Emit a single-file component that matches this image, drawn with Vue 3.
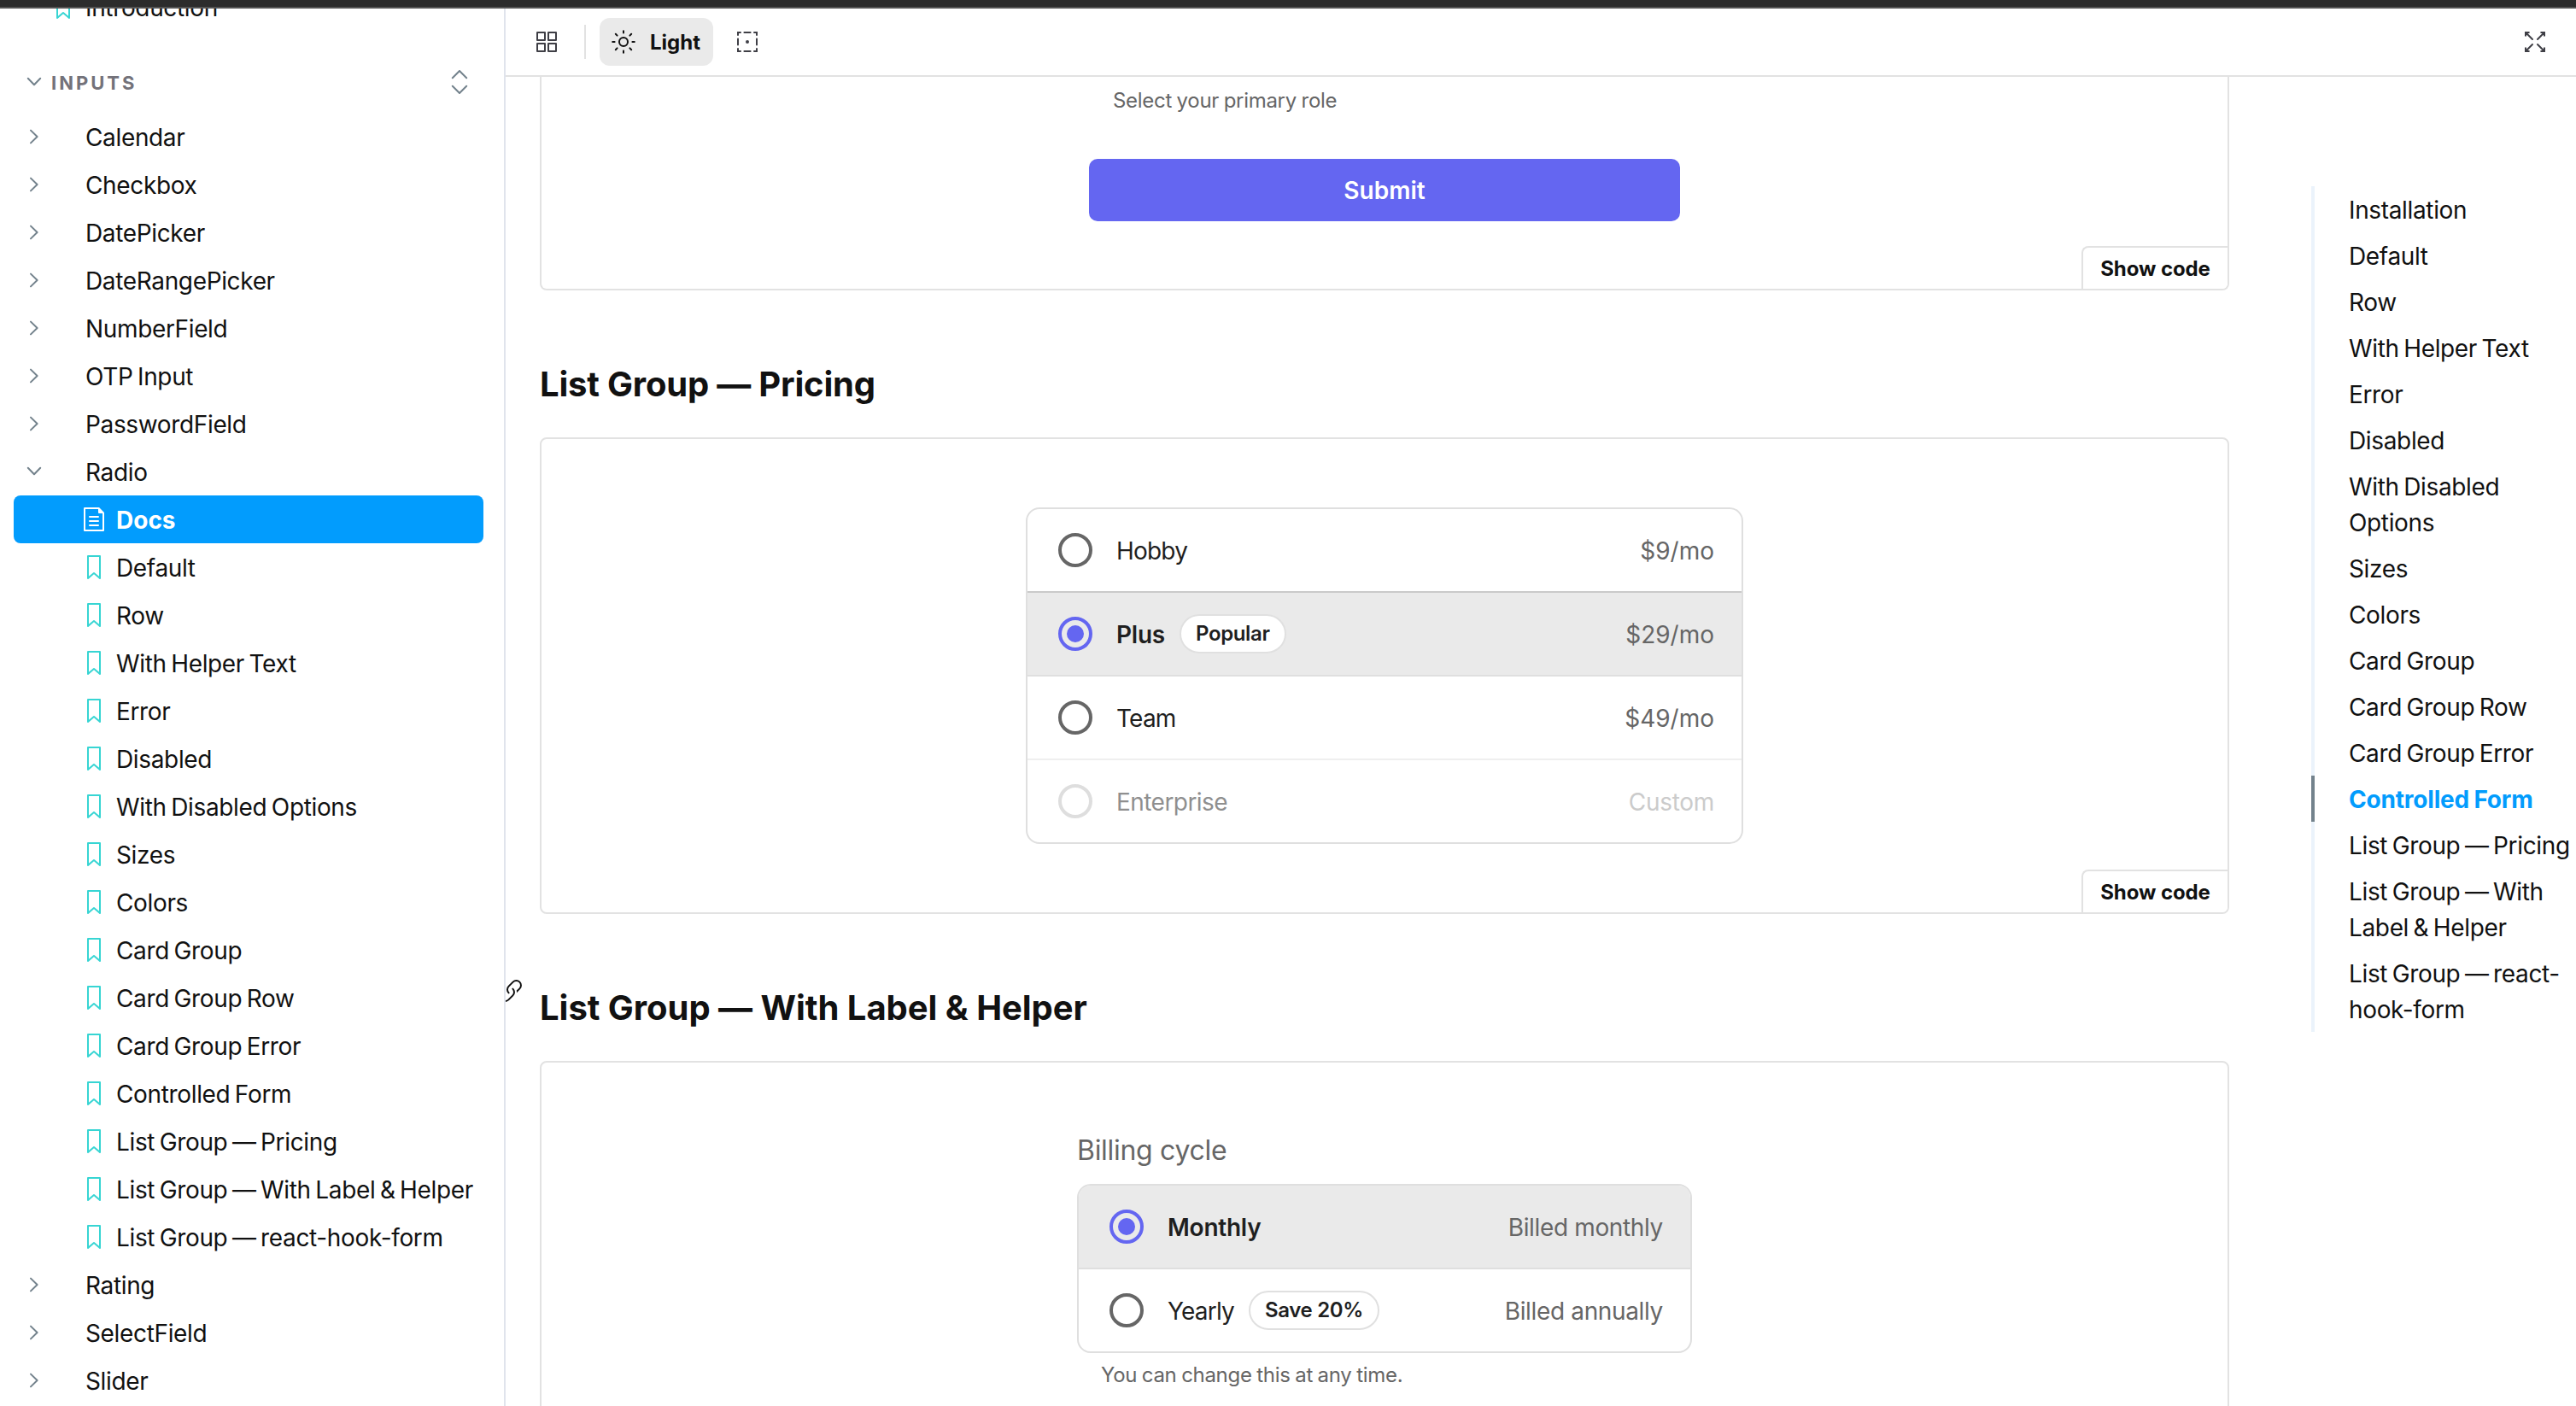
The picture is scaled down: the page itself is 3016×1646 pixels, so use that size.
<template>
    <div class="window">
        <div class="window-edge"></div>
        <div class="layout">
            <aside class="sidebar">
                <div class="tree-row story intro">
                    <svg class="icon bookmark" viewBox="0 0 14 14"><path :d="icons.bookmark" /></svg>
                    <span>Introduction</span>
                </div>
                <div class="tree-heading">
                    <svg class="chevron" viewBox="0 0 20 20"><path d="M2.8 5.8 10 13.2l7.2-7.4" /></svg>
                    <span class="heading-text">INPUTS</span>
                    <svg class="expand" viewBox="0 0 20 28"><path d="M1.8 9.2 10 1l8.2 8.2M1.8 18.8 10 27l8.2-8.2" /></svg>
                </div>
                <template v-for="item in tree" :key="item.name">
                    <div class="tree-row component">
                        <svg class="chevron" viewBox="0 0 20 20">
                            <path :d="item.children ? 'M2.8 5.8 10 13.2l7.2-7.4' : 'M6 2.6 13.6 10 6 17.4'" />
                        </svg>
                        <span>{{ item.name }}</span>
                    </div>
                    <div
                        v-for="child in item.children"
                        :key="child"
                        class="tree-row story"
                        :class="{ selected: child === selectedStory }"
                    >
                        <svg class="icon" :class="{ bookmark: child !== 'Docs' }" viewBox="0 0 14 14">
                            <path :d="child === 'Docs' ? icons.document : icons.bookmark" />
                        </svg>
                        <span>{{ child }}</span>
                    </div>
                </template>
            </aside>

            <main class="main">
                <header class="toolbar">
                    <svg class="icon" viewBox="0 0 14 14"><path :d="icons.grid" /></svg>
                    <span class="separator"></span>
                    <button class="theme-button">
                        <svg class="icon line" viewBox="0 0 14 14">
                            <circle cx="7" cy="7" r="2.5" />
                            <path
                                d="M7 .6v1.2M7 12.2v1.2M.6 7h1.2M12.2 7h1.2M2.4 2.4l.9.9M10.7 10.7l.9.9M2.4 11.6l.9-.9M10.7 3.3l.9-.9"
                            />
                        </svg>
                        <span>Light</span>
                    </button>
                    <svg class="icon line outline-icon" viewBox="0 0 14 14">
                        <path
                            d="M1.5 3V1.5H3M5.2 1.5h3.6M11 1.5h1.5V3M12.5 5.2v3.6M12.5 11v1.5H11M8.8 12.5H5.2M3 12.5H1.5V11M1.5 8.8V5.2"
                        />
                        <circle cx="7" cy="7" r=".5" />
                    </svg>
                    <svg class="icon line fullscreen" viewBox="0 0 14 14">
                        <path
                            d="M1.5 3.4V1.5h1.9M1.5 1.5l4 4M10.6 1.5h1.9v1.9M12.5 1.5l-4 4M12.5 10.6v1.9h-1.9M12.5 12.5l-4-4M3.4 12.5H1.5v-1.9M1.5 12.5l4-4"
                        />
                    </svg>
                </header>

                <div class="page">
                    <div class="content">
                        <section class="panel panel-cut">
                            <div class="form">
                                <p class="helper">Select your primary role</p>
                                <button class="submit">Submit</button>
                            </div>
                            <button class="show-code">Show code</button>
                        </section>

                        <h3 class="title title-short">List Group — Pricing</h3>
                        <section class="panel">
                            <div class="list-group pricing">
                                <div
                                    v-for="plan in plans"
                                    :key="plan.label"
                                    class="option"
                                    :class="{ checked: plan.label === selectedPlan, disabled: plan.disabled }"
                                    @click="selectPlan(plan)"
                                >
                                    <span class="radio"></span>
                                    <span class="option-label">{{ plan.label }}</span>
                                    <span v-if="plan.badge" class="badge">{{ plan.badge }}</span>
                                    <span class="option-meta">{{ plan.meta }}</span>
                                </div>
                            </div>
                            <button class="show-code">Show code</button>
                        </section>

                        <h3 class="title">
                            <svg class="icon anchor" viewBox="0 0 14 14"><path :d="icons.link" /></svg>
                            List Group — With Label &amp; Helper
                        </h3>
                        <section class="panel panel-last">
                            <div class="billing">
                                <p class="group-label">Billing cycle</p>
                                <div class="list-group">
                                    <div
                                        v-for="cycle in cycles"
                                        :key="cycle.label"
                                        class="option"
                                        :class="{ checked: cycle.label === selectedCycle }"
                                        @click="selectedCycle = cycle.label"
                                    >
                                        <span class="radio"></span>
                                        <span class="option-label">{{ cycle.label }}</span>
                                        <span v-if="cycle.badge" class="badge">{{ cycle.badge }}</span>
                                        <span class="option-meta">{{ cycle.meta }}</span>
                                    </div>
                                </div>
                                <p class="helper">You can change this at any time.</p>
                            </div>
                        </section>
                    </div>

                    <nav class="toc">
                        <a v-for="entry in toc" :key="entry" :class="{ active: entry === activeEntry }">{{ entry }}</a>
                    </nav>
                </div>
            </main>
        </div>
    </div>
</template>

<script setup>
import { ref } from "vue";

const icons = {
    bookmark:
        "M3.5 0h7a.5.5 0 01.5.5v13a.5.5 0 01-.454.498.462.462 0 01-.371-.118L7 11.159l-3.175 2.72a.46.46 0 01-.379.118A.5.5 0 013 13.5V.5a.5.5 0 01.5-.5zM4 12.413l2.664-2.284a.454.454 0 01.377-.128.498.498 0 01.284.12L10 12.412V1H4v11.413z",
    document:
        "M4 5.5a.5.5 0 01.5-.5h5a.5.5 0 010 1h-5a.5.5 0 01-.5-.5zM4.5 7.5a.5.5 0 000 1h5a.5.5 0 000-1h-5zM4 10.5a.5.5 0 01.5-.5h5a.5.5 0 010 1h-5a.5.5 0 01-.5-.5zM1.5 0a.5.5 0 00-.5.5v13a.5.5 0 00.5.5h11a.5.5 0 00.5-.5V3.207a.5.5 0 00-.146-.353L10.146.146A.5.5 0 009.793 0H1.5zM2 1h7.5v2a.5.5 0 00.5.5h2V13H2V1z",
    grid: "M1 1.5a.5.5 0 01.5-.5H6a.5.5 0 01.5.5V6a.5.5 0 01-.5.5H1.5A.5.5 0 011 6V1.5zm1 4V2h3.5v3.5H2zM7.5 1.5A.5.5 0 018 1h4.5a.5.5 0 01.5.5V6a.5.5 0 01-.5.5H8a.5.5 0 01-.5-.5V1.5zm1 4V2H12v3.5H8.5zM1.5 7.5A.5.5 0 001 8v4.5a.5.5 0 00.5.5H6a.5.5 0 00.5-.5V8a.5.5 0 00-.5-.5H1.5zm.5 1V12h3.5V8.5H2zM7.5 8a.5.5 0 01.5-.5h4.5a.5.5 0 01.5.5v4.5a.5.5 0 01-.5.5H8a.5.5 0 01-.5-.5V8zm1 .5V12H12V8.5H8.5z",
    link: "M11.841 2.159a2.25 2.25 0 00-3.182 0l-2.5 2.5a2.25 2.25 0 000 3.182.5.5 0 01-.707.707 3.25 3.25 0 010-4.596l2.5-2.5a3.25 3.25 0 014.596 4.596l-2.063 2.063a4.27 4.27 0 00-.094-1.32l1.45-1.45a2.25 2.25 0 000-3.182zM3.61 7.21c-.1-.434-.132-.88-.095-1.321L1.452 7.952a3.25 3.25 0 104.596 4.596l2.5-2.5a3.25 3.25 0 000-4.596.5.5 0 00-.707.707 2.25 2.25 0 010 3.182l-2.5 2.5A2.25 2.25 0 112.159 8.66l1.45-1.45z",
};

const stories = [
    "Default",
    "Row",
    "With Helper Text",
    "Error",
    "Disabled",
    "With Disabled Options",
    "Sizes",
    "Colors",
    "Card Group",
    "Card Group Row",
    "Card Group Error",
    "Controlled Form",
    "List Group — Pricing",
    "List Group — With Label & Helper",
    "List Group — react-hook-form",
];

const tree = [
    { name: "Calendar" },
    { name: "Checkbox" },
    { name: "DatePicker" },
    { name: "DateRangePicker" },
    { name: "NumberField" },
    { name: "OTP Input" },
    { name: "PasswordField" },
    { name: "Radio", children: ["Docs", ...stories] },
    { name: "Rating" },
    { name: "SelectField" },
    { name: "Slider" },
];

const toc = ["Installation", ...stories];

const plans = [
    { label: "Hobby", meta: "$9/mo" },
    { label: "Plus", meta: "$29/mo", badge: "Popular" },
    { label: "Team", meta: "$49/mo" },
    { label: "Enterprise", meta: "Custom", disabled: true },
];

const cycles = [
    { label: "Monthly", meta: "Billed monthly" },
    { label: "Yearly", meta: "Billed annually", badge: "Save 20%" },
];

const selectedStory = ref("Docs");
const activeEntry = ref("Controlled Form");
const selectedPlan = ref("Plus");
const selectedCycle = ref("Monthly");

const selectPlan = (plan) => {
    if (!plan.disabled) {
        selectedPlan.value = plan.label;
    }
};
</script>

<style>
body {
    margin: 0;
    overflow: hidden;
}
</style>

<style scoped>
.window {
    display: flex;
    flex-direction: column;
    height: 1646px;
    overflow: hidden;
    background: #fff;
    color: #111;
    font-family: Inter, "Liberation Sans", sans-serif;
    font-size: 28px;
}

.window * {
    box-sizing: border-box;
}

.window-edge {
    flex: none;
    height: 10px;
    background: #2c2c2c;
    border-bottom: 2px solid #545454;
}

.layout {
    display: flex;
    flex: 1;
    min-height: 0;
}

button {
    border: none;
    font-family: inherit;
    color: inherit;
    background: #fff;
}

p {
    margin: 0;
}

.icon {
    flex: none;
    width: 28px;
    height: 28px;
    fill: currentColor;
    fill-rule: evenodd;
}

.icon.line {
    fill: none;
    stroke: currentColor;
    stroke-width: 1;
    stroke-linecap: round;
}

/* sidebar */
.sidebar {
    flex: none;
    width: 592px;
    padding: 0 24px 0 16px;
    border-right: 2px solid #e0e4ec;
    overflow: hidden;
}

.tree-row {
    display: flex;
    align-items: center;
    height: 56px;
    border-radius: 8px;
    white-space: nowrap;
    letter-spacing: -0.35px;
    word-spacing: -2px;
}

.tree-row span {
    padding-top: 2px;
}

.tree-row.component {
    gap: 50px;
    padding-left: 14px;
}

.tree-row.story {
    gap: 12px;
    padding-left: 80px;
}

.tree-row.intro {
    margin-top: -30px;
    padding-left: 44px;
    gap: 12px;
}

.tree-row.selected {
    background: #029cfd;
    color: #fff;
    font-weight: 700;
    letter-spacing: 0;
}

.bookmark {
    color: #37d5d3;
}

.chevron {
    flex: none;
    width: 20px;
    height: 20px;
}

.chevron path,
.expand path {
    fill: none;
    stroke: #73828c;
    stroke-width: 2;
    stroke-linecap: round;
    stroke-linejoin: round;
}

.tree-heading {
    display: flex;
    align-items: center;
    height: 56px;
    margin: 32px 0 8px;
    padding: 0 18px 0 14px;
    color: #73727a;
    font-size: 22px;
    font-weight: 700;
    letter-spacing: 3px;
}

.heading-text {
    flex: 1;
    margin-left: 10px;
    padding-top: 1px;
}

.expand {
    width: 20px;
    height: 28px;
}

/* toolbar */
.main {
    display: flex;
    flex: 1;
    flex-direction: column;
    min-width: 0;
}

.toolbar {
    display: flex;
    flex: none;
    align-items: center;
    height: 80px;
    padding: 0 34px;
    border-bottom: 2px solid #e2e2e2;
    color: #3f3f46;
}

.separator {
    width: 2px;
    height: 40px;
    margin: 0 16px 0 30px;
    background: #e2e2e2;
}

.theme-button {
    display: flex;
    align-items: center;
    gap: 17px;
    width: 133px;
    height: 56px;
    padding: 0 14px;
    border-radius: 12px;
    background: #eaeaea;
    color: #111;
    font-size: 24px;
    font-weight: 700;
}

.outline-icon {
    margin-left: 26px;
}

.fullscreen {
    margin-left: auto;
}

/* docs page */
.page {
    display: flex;
    flex: 1;
    align-items: flex-start;
    min-height: 0;
    overflow: hidden;
}

.content {
    flex: none;
    width: 2018px;
    padding-left: 40px;
}

.panel {
    display: flex;
    flex-direction: column;
    align-items: center;
    height: 558px;
    padding-top: 80px;
    border: 2px solid #e2e2e2;
    border-radius: 8px;
}

.panel-cut {
    height: 250px;
    padding-top: 8px;
    border-top: none;
    border-top-left-radius: 0;
    border-top-right-radius: 0;
}

.show-code {
    align-self: flex-end;
    width: 171px;
    height: 50px;
    margin-top: auto;
    padding: 0;
    border: 2px solid #e2e2e2;
    border-width: 2px 0 0 2px;
    border-radius: 8px 0 6px 0;
    font-size: 24px;
    font-weight: 700;
    letter-spacing: -0.1px;
}

.title {
    position: relative;
    margin: 80px 0 32px;
    font-size: 40px;
    font-weight: 700;
    line-height: 60px;
    letter-spacing: -0.03px;
}

.title-short {
    letter-spacing: -0.2px;
}

/* hover anchor hangs in the gutter, partly under the sidebar */
.anchor {
    position: absolute;
    left: -48px;
    top: -4px;
    clip-path: inset(0 0 0 8px);
}

.form {
    display: flex;
    flex-direction: column;
    width: 692px;
}

.form .helper {
    margin: 0 0 48px;
}

.helper {
    padding-left: 28px;
    color: #666;
    font-size: 24px;
    line-height: 40px;
    letter-spacing: -0.3px;
    word-spacing: -0.8px;
}

.submit {
    height: 73px;
    border-radius: 10px;
    background: #6466f1;
    color: #fff;
    font-size: 28px;
    font-weight: 600;
}

.billing {
    width: 720px;
}

.billing .helper {
    margin-top: 6px;
}

.group-label {
    margin-bottom: 17px;
    padding-top: 1px;
    color: #666;
    font-size: 32px;
    line-height: 44px;
    letter-spacing: -0.3px;
}

.list-group {
    border: 2px solid #dfdfdf;
    border-radius: 16px;
    overflow: hidden;
}

.list-group.pricing {
    width: 840px;
}

.option {
    display: flex;
    align-items: center;
    height: 96px;
    padding: 0 32px 0 36px;
    color: #1f1f1f;
}

.option + .option {
    height: 98px;
    border-top: 2px solid #dfdfdf;
}

.option.checked {
    background: #eaeaea;
}

.option + .option.checked {
    border-top-color: #cacaca;
}

.option + .option.disabled {
    border-top-color: #efefef;
}

.radio {
    display: flex;
    align-items: center;
    justify-content: center;
    width: 40px;
    height: 40px;
    margin-right: 28px;
    border: 4px solid #666;
    border-radius: 50%;
}

.checked .radio {
    border-color: #6466f1;
}

.checked .radio::after {
    content: "";
    width: 20px;
    height: 20px;
    border-radius: 50%;
    background: #6466f1;
}

.disabled .radio {
    border-color: #dedede;
}

.option-label {
    padding-top: 1px;
    letter-spacing: -0.8px;
}

.checked .option-label {
    font-weight: 600;
    letter-spacing: -0.25px;
}

.disabled .option-label {
    color: #8f8f8f;
    letter-spacing: -0.55px;
}

.badge {
    height: 46px;
    margin-left: 17px;
    padding: 0 17px;
    border: 2px solid #e0e0e0;
    border-radius: 23px;
    background: #fff;
    font-size: 24px;
    font-weight: 600;
    line-height: 42px;
    letter-spacing: -0.35px;
}

.option-meta {
    margin-left: auto;
    padding-top: 1px;
    color: #666;
}

.billing .option-meta {
    letter-spacing: -0.35px;
}

.disabled .option-meta {
    color: #cbcbcb;
    letter-spacing: -0.3px;
}

/* table of contents */
.toc {
    display: flex;
    flex-direction: column;
    margin: 128px 0 0 96px;
    width: 310px;
}

.toc a {
    padding: 7px 0 5px 40px;
    border-left: 4px solid #ebf3fb;
    line-height: 42px;
    letter-spacing: -0.35px;
    word-spacing: -2px;
}

.toc a.active {
    border-left-color: #73828c;
    color: #029cfd;
    font-weight: 700;
    letter-spacing: -0.2px;
    word-spacing: -1px;
}
</style>
